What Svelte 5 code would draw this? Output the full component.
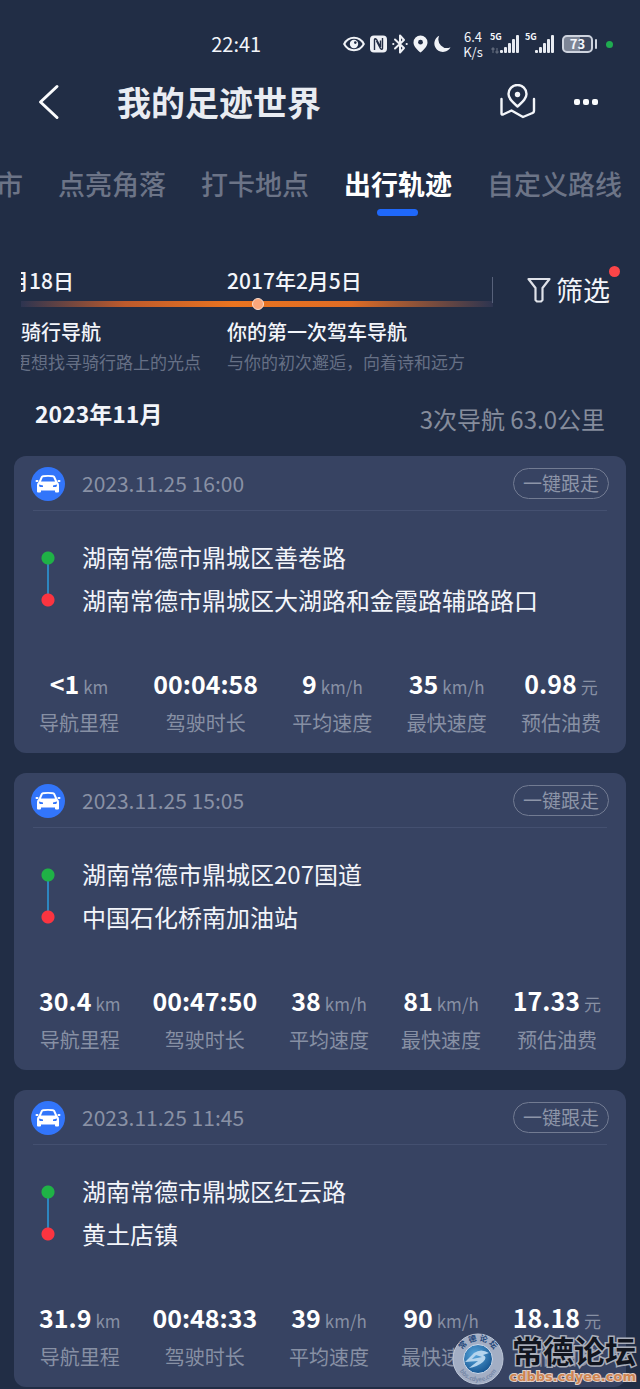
<script>
  const tabs = ['市', '点亮角落', '打卡地点', '出行轨迹', '自定义路线'];
  let activeTab = $state('出行轨迹');

  const trips = [
    {
      time: '2023.11.25 16:00',
      from: '湖南常德市鼎城区善卷路',
      to: '湖南常德市鼎城区大湖路和金霞路辅路路口',
      stats: [['<1', 'km', '导航里程'], ['00:04:58', '', '驾驶时长'], ['9', 'km/h', '平均速度'], ['35', 'km/h', '最快速度'], ['0.98', '元', '预估油费']]
    },
    {
      time: '2023.11.25 15:05',
      from: '湖南常德市鼎城区207国道',
      to: '中国石化桥南加油站',
      stats: [['30.4', 'km', '导航里程'], ['00:47:50', '', '驾驶时长'], ['38', 'km/h', '平均速度'], ['81', 'km/h', '最快速度'], ['17.33', '元', '预估油费']]
    },
    {
      time: '2023.11.25 11:45',
      from: '湖南常德市鼎城区红云路',
      to: '黄土店镇',
      stats: [['31.9', 'km', '导航里程'], ['00:48:33', '', '驾驶时长'], ['39', 'km/h', '平均速度'], ['90', 'km/h', '最快速度'], ['18.18', '元', '预估油费']]
    }
  ];
</script>

{#snippet signal(roaming)}
  <span class="signal">
    <span class="gen">5G</span>
    <svg width="30" height="20" viewBox="0 0 30 20" fill="#e8ebf1">
      {#if roaming}
        <path d="M3 19v-5M1.500 15.500 3 14l1.500 1.500M7 14v5M5.500 17.500 7 19l1.500-1.500" fill="none" stroke="#5d6678" stroke-width="1.300" />
      {/if}
      <rect x="10" y="16" width="3" height="3" rx="1" />
      <rect x="14" y="13" width="3" height="6" rx="1" />
      <rect x="18" y="9" width="3" height="10" rx="1" />
      <rect x="22" y="5" width="3" height="14" rx="1" />
      <rect x="26" y="1" width="3" height="18" rx="1" />
    </svg>
  </span>
{/snippet}

<div class="page">
  <div class="status">
    <span class="clock">22:41</span>
    <div class="indicators">
      <svg width="22" height="18" viewBox="0 0 22 18" fill="none" stroke="#f1f3f7">
        <path d="M1.200 9C5.500.800 16.500.800 20.800 9 16.500 17.200 5.500 17.200 1.200 9Z" stroke-width="2" />
        <circle cx="11" cy="9" r="4.200" fill="#f1f3f7" stroke="none" />
        <circle cx="12.300" cy="7.600" r="1.300" fill="#222d45" stroke="none" />
      </svg>
      <svg width="17" height="18" viewBox="0 0 17 18">
        <rect x="0" y="0.500" width="17" height="17" rx="4" fill="#eef0f5" />
        <path d="M4.500 15V4.500Q5 3 6.500 4.500L10.500 12V5.500M12.500 3V13.500Q12 15 10.500 13.500L6.500 6" fill="none" stroke="#222d45" stroke-width="1.400" />
      </svg>
      <svg width="16" height="20" viewBox="0 0 16 20" fill="none" stroke="#eef0f5" stroke-width="2" stroke-linejoin="round" stroke-linecap="round">
        <path d="M3 5.500 12 14 8 18.500V1.500L12 6 3 14.500" />
        <path d="M1.200 10h.2M14.600 10h.2" />
      </svg>
      <svg width="15" height="18" viewBox="0 0 15 18">
        <path d="M7.500.500a7 7 0 0 1 7 7c0 4-4.500 8-7 10-2.500-2-7-6-7-10a7 7 0 0 1 7-7Z" fill="#f1f3f7" />
        <circle cx="7.500" cy="7.200" r="2.400" fill="#222d45" />
      </svg>
      <svg width="18" height="18" viewBox="0 0 18 18">
        <path d="M6.200.800A8.500 8.500 0 1 0 17.500 12.200 8.600 8.600 0 0 1 6.200.800Z" fill="#f1f3f7" />
      </svg>
      <span class="speed"><span>6.4</span><span>K/s</span></span>
      {@render signal(true)}
      {@render signal(false)}
      <span class="battery"><span>73</span></span>
      <span class="privacy"></span>
    </div>
  </div>

  <header>
    <button class="icon back" aria-label="返回">
      <svg width="24" height="38" viewBox="0 0 24 38" fill="none" stroke="#fafbfd" stroke-width="3" stroke-linecap="round" stroke-linejoin="round">
        <path d="M21 3.500 4.500 19 21 34.500" />
      </svg>
    </button>
    <h1>我的足迹世界</h1>
    <button class="icon" aria-label="地图">
      <svg width="36" height="36" viewBox="0 0 36 36" fill="none" stroke="#f3f5f9" stroke-width="2.400" stroke-linejoin="round" stroke-linecap="round">
        <path d="M1.500 15V29.500Q1.500 31 3 30.500L11.500 26.500 23 33 32.500 29Q34 28.500 34 27V15" />
        <path d="M17.500 22.500C13 18.500 8.500 15 8.500 10a9 9 0 0 1 18 0c0 5-4.500 8.500-9 12.500Z" />
        <circle cx="17.500" cy="10.500" r="2.700" fill="#f3f5f9" stroke="none" />
      </svg>
    </button>
    <button class="icon more" aria-label="更多">
      <svg width="26" height="8" viewBox="0 0 26 8" fill="#fafbfd">
        <rect x="1" y="1" width="6" height="6" rx="2" />
        <rect x="10" y="1" width="6" height="6" rx="2" />
        <rect x="19" y="1" width="6" height="6" rx="2" />
      </svg>
    </button>
  </header>

  <nav>
    {#each tabs as tab}
      <button class="tab" class:active={tab === activeTab} onclick={() => (activeTab = tab)}>{tab}</button>
    {/each}
  </nav>

  <section class="milestones">
    <div class="timeline">
      <div class="event earlier">
        <span class="date">月18日</span>
        <strong>骑行导航</strong>
        <small>更想找寻骑行路上的光点</small>
      </div>
      <div class="event">
        <span class="date">2017年2月5日</span>
        <strong>你的第一次驾车导航</strong>
        <small>与你的初次邂逅，向着诗和远方</small>
      </div>
      <div class="track"><i></i></div>
    </div>
    <button class="filter">
      <svg width="24" height="26" viewBox="0 0 24 26" fill="none" stroke="#dfe2e9" stroke-width="2.200" stroke-linejoin="round">
        <path d="M1.500 2H22.500L15.500 11V23L14 24.500H10L8.500 23V11Z" />
      </svg>
      筛选
      <span class="badge"></span>
    </button>
  </section>

  <main>
    <div class="month">
      <h2>2023年11月</h2>
      <span>3次导航 63.0公里</span>
    </div>

    {#each trips as trip}
      <article>
        <div class="head">
          <svg width="34" height="34" viewBox="0 0 34 34">
            <circle cx="17" cy="17" r="17" fill="#3275fa" />
            <path d="M10 9.500Q10.500 8.500 12 8.200 17 7.600 22 8.200 23.500 8.500 24 9.500L26.500 15Q28 16 28 18V24.500Q28 25.500 27 25.500H25Q24 25.500 24 24.500V23.500H10V24.500Q10 25.500 9 25.500H7Q6 25.500 6 24.500V18Q6 16 7.500 15Z" fill="#fff" />
            <path d="M11.800 10.300Q17 9.300 22.200 10.300L24 14.500H10Z" fill="#3275fa" />
            <path d="M8 17.500 12 18.500V20H9Q8 19.500 8 17.500ZM26 17.500 22 18.500V20H25Q26 19.500 26 17.500Z" fill="#3275fa" />
            <path d="M5.500 14h1M28.500 14h-1" stroke="#fff" stroke-width="2" stroke-linecap="round" />
          </svg>
          <time>{trip.time}</time>
          <button class="follow">一键跟走</button>
        </div>
        <div class="route">
          <span class="rail"></span>
          <div>
            <p>{trip.from}</p>
            <p>{trip.to}</p>
          </div>
        </div>
        <dl>
          {#each trip.stats as [value, unit, label]}
            <div>
              <dt>{label}</dt>
              <dd>{value}{#if unit}<span>{unit}</span>{/if}</dd>
            </div>
          {/each}
        </dl>
      </article>
    {/each}
  </main>

  <div class="forum">
    <svg width="52" height="52" viewBox="0 0 52 52">
      <defs>
        <radialGradient id="globe" cx="0.4" cy="0.35" r="0.7">
          <stop offset="0" stop-color="#59a8dd" />
          <stop offset="1" stop-color="#13528f" />
        </radialGradient>
        <path id="arcTop" d="M8 26a18 18 0 0 1 36 0" />
        <path id="arcBottom" d="M4.500 27a21.500 21.500 0 0 0 43 0" />
      </defs>
      <circle cx="26" cy="26" r="25" fill="#a3aec4" stroke="#bdc7d8" />
      <circle cx="26" cy="26" r="14.500" fill="url(#globe)" stroke="#d2dceb" stroke-width="1" />
      <path d="M13 29 22 20Q29 15 37 20L31 22Q36 24 31 29 25 34 17 35L26 28 13 29ZM20 26 30 24 24 22Z" fill="#b4d4ed" />
      <text font-size="8" font-weight="700" fill="#234679"><textPath href="#arcTop" startOffset="50%" text-anchor="middle">常 德 论 坛</textPath></text>
      <text font-size="6" font-weight="700" fill="#7788a7"><textPath href="#arcBottom" startOffset="50%" text-anchor="middle">bbs.cdyee.com</textPath></text>
    </svg>
    <div>
      <b>常德论坛</b>
      <span>cdbbs.cdyee.com</span>
    </div>
  </div>
</div>

<style>
  :global(body) {
    margin: 0;
    background: #212d45;
  }

  .page {
    position: relative;
    overflow: hidden;
    padding-bottom: 2px;
    background: #212d45;
    color: #f3f5fa;
    font-family: 'Noto Sans CJK SC', 'Noto Sans', sans-serif;
  }

  button {
    padding: 0;
    border: 0;
    background: none;
    color: inherit;
    font: inherit;
  }

  svg {
    display: block;
    flex: none;
  }

  .status {
    display: flex;
    align-items: center;
    justify-content: space-between;
    height: 24px;
    padding: 32px 27px 0 33%;
  }

  .clock {
    font-size: 20px;
    line-height: 24px;
  }

  .indicators {
    display: flex;
    align-items: center;
    gap: 5px;
  }

  .speed {
    display: flex;
    flex-direction: column;
    width: 24px;
    margin-left: 5px;
    font-size: 13px;
    line-height: 15px;
    text-align: center;
  }

  .signal {
    position: relative;
  }

  .gen {
    position: absolute;
    top: -2px;
    left: 0;
    font-size: 9px;
    font-weight: 700;
    line-height: 10px;
  }

  .battery {
    position: relative;
    width: 27px;
    height: 14px;
    margin: 0 8px 0 2px;
    border: 2px solid #ced3de;
    border-radius: 5px;
    background: linear-gradient(90deg, #7d8596 60%, #3f4960 60%);
    font-size: 13px;
    font-weight: 700;
    line-height: 14px;
    text-align: center;
  }

  .battery::after {
    content: '';
    position: absolute;
    top: 2px;
    right: -6px;
    width: 2px;
    height: 10px;
    border-radius: 1px;
    background: #ced3de;
  }

  .privacy {
    width: 7px;
    height: 7px;
    border-radius: 50%;
    background: #1fab50;
  }

  header {
    display: flex;
    align-items: center;
    height: 60px;
    margin-top: 16px;
    padding: 0 41px 0 36px;
  }

  .back {
    margin-right: 57px;
  }

  h1 {
    flex: 1;
    margin: 0;
    color: #e9ecf2;
    font-size: 34px;
    font-weight: 700;
    line-height: 60px;
  }

  .more {
    margin-left: 37px;
  }

  nav {
    display: flex;
    gap: 35px;
    margin: 32px 0 0 -4px;
    overflow: hidden;
    white-space: nowrap;
  }

  .tab {
    position: relative;
    flex: none;
    height: 52px;
    padding-bottom: 12px;
    color: #6c7487;
    font-size: 27px;
    font-weight: 500;
    line-height: 40px;
  }

  .tab.active {
    color: #fff;
    font-weight: 700;
  }

  .tab.active::after {
    content: '';
    position: absolute;
    bottom: 0;
    left: 50%;
    width: 41px;
    height: 7px;
    margin-left: -21px;
    border-radius: 4px;
    background: #1f68fa;
  }

  .milestones {
    display: flex;
    align-items: flex-start;
    justify-content: space-between;
    margin-top: 49px;
    padding: 0 30px 0 21px;
  }

  .timeline {
    position: relative;
    display: flex;
    flex: 1;
    overflow: hidden;
    white-space: nowrap;
  }

  .timeline::after {
    content: '';
    position: absolute;
    top: 12px;
    right: 0;
    width: 1px;
    height: 26px;
    background: #57617a;
  }

  .event {
    display: flex;
    flex-direction: column;
    flex: none;
  }

  .earlier {
    width: 206px;
  }

  .earlier .date {
    margin-left: -13px;
  }

  .earlier small {
    margin-left: -7px;
  }

  .date {
    margin-bottom: 21px;
    font-size: 21px;
    font-weight: 500;
    line-height: 30px;
  }

  strong {
    font-size: 20px;
    font-weight: 500;
    line-height: 32px;
  }

  small {
    color: #667085;
    font-size: 17px;
    line-height: 28px;
  }

  .track {
    position: absolute;
    top: 36px;
    right: 0;
    left: 0;
    height: 6px;
    background: linear-gradient(90deg, #2d3450, #bd5a2c 22%, #ea7420 45%, #df6c25 70%, #2d3450);
  }

  .track i {
    position: absolute;
    top: -3px;
    left: 50%;
    box-sizing: border-box;
    width: 12px;
    height: 12px;
    margin-left: -5px;
    border: 1px solid #fbdccb;
    border-radius: 50%;
    background: #faa77b;
  }

  .filter {
    position: relative;
    display: flex;
    align-items: center;
    gap: 5px;
    margin: 5px 0 0 34px;
    font-size: 27px;
    line-height: 40px;
  }

  .badge {
    position: absolute;
    top: -4px;
    right: -10px;
    width: 11px;
    height: 11px;
    border-radius: 50%;
    background: #fb4548;
  }

  main {
    display: grid;
    gap: 20px;
    padding: 0 14px;
  }

  .month {
    display: flex;
    justify-content: space-between;
    margin: 21px 21px -5px;
    color: #858c9c;
    font-size: 24px;
    line-height: 44px;
  }

  .month h2 {
    margin: 0;
    color: #f3f5fa;
    font-size: 23px;
    font-weight: 700;
    line-height: 32px;
  }

  article {
    padding: 0 17px 16px;
    border-radius: 12px;
    background: #374362;
  }

  .head {
    display: flex;
    align-items: center;
    gap: 17px;
    height: 55px;
    background: linear-gradient(#445070, #445070) center bottom / calc(100% - 4px) 1px no-repeat;
  }

  time {
    flex: 1;
    padding-bottom: 2px;
    color: #8991a5;
    font-size: 21px;
    line-height: 32px;
  }

  .follow {
    padding: 0 9px 2px;
    border: 1px solid #727b92;
    border-radius: 16px;
    color: #8d95a8;
    font-size: 19px;
    line-height: 27px;
  }

  .route {
    display: flex;
    gap: 27px;
    margin-top: 24px;
    padding-left: 10px;
  }

  .rail {
    width: 14px;
    margin: 16px 0 14px;
    background:
      radial-gradient(circle at 7px 7px, #1fb246 6px, transparent 7px) top / 14px 14px no-repeat,
      radial-gradient(circle at 7px 7px, #fb3440 6px, transparent 7px) bottom / 14px 14px no-repeat,
      linear-gradient(#2d86c0, #2d86c0) center / 2px 80% no-repeat;
  }

  p {
    margin: 0;
    font-size: 24px;
    line-height: 43px;
  }

  dl {
    display: flex;
    justify-content: space-between;
    margin: 46px 0 0;
    padding: 0 8px;
  }

  dl div {
    display: flex;
    flex-direction: column-reverse;
    align-items: center;
  }

  dt {
    color: #8790a4;
    font-size: 20px;
    line-height: 28px;
  }

  dd {
    margin: 0 0 10px;
    color: #fff;
    font-size: 25px;
    font-weight: 700;
    line-height: 32px;
    white-space: nowrap;
  }

  dd span {
    margin-left: 4px;
    color: #8790a4;
    font-size: 17px;
    font-weight: 400;
    line-height: 1;
  }

  .forum {
    position: absolute;
    right: 4px;
    bottom: 3px;
    display: flex;
    align-items: center;
    gap: 5px;
  }

  .forum div {
    display: flex;
    flex-direction: column;
    align-items: flex-end;
    paint-order: stroke fill;
  }

  .forum b {
    color: #11151f;
    font-family: 'Noto Sans CJK SC', sans-serif;
    font-size: 31px;
    font-weight: 700;
    line-height: 36px;
    -webkit-text-stroke: 3px #a9aeba;
  }

  .forum div span {
    color: #cf8552;
    font-family: 'DejaVu Sans', sans-serif;
    font-size: 13px;
    font-weight: 700;
    line-height: 18px;
    -webkit-text-stroke: 2px #e1d0c8;
  }
</style>
